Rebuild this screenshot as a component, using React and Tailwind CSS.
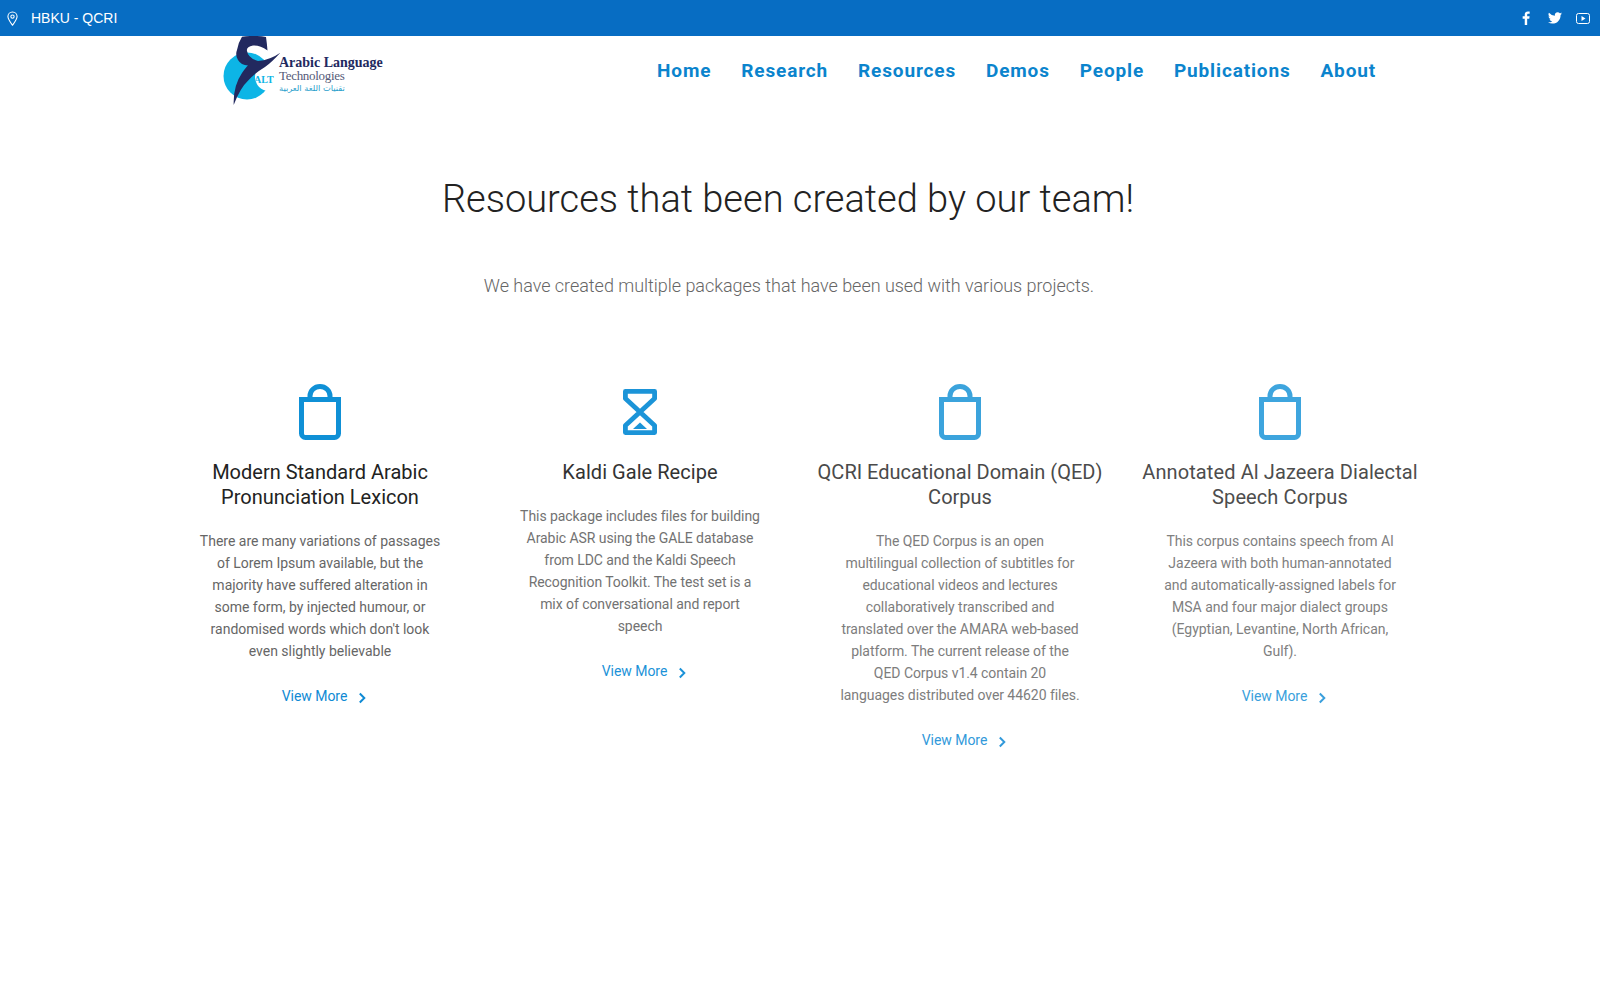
import React from 'react';

const cards = [
    {
        icon: 'bag',
        title: 'Modern Standard Arabic Pronunciation Lexicon',
        text: "There are many variations of passages of Lorem Ipsum available, but the majority have suffered alteration in some form, by injected humour, or randomised words which don't look even slightly believable",
        titleColor: 'text-[#222222]',
        textColor: 'text-[#666666]',
        iconColor: 'text-[#0f90d6]',
        linkColor: 'text-[#0f8ad4]',
        tracking: 'tracking-[-0.01px]',
        titleTracking: 'tracking-[0px]',
    },
    {
        icon: 'hourglass',
        title: 'Kaldi Gale Recipe',
        text: 'This package includes files for building Arabic ASR using the GALE database from LDC and the Kaldi Speech Recognition Toolkit. The test set is a mix of conversational and report speech',
        titleColor: 'text-[#333333]',
        textColor: 'text-[#727272]',
        iconColor: 'text-[#1b94d8]',
        linkColor: 'text-[#1b92d8]',
        tracking: 'tracking-[-0.06px]',
        titleTracking: 'tracking-[0.05px]',
    },
    {
        icon: 'bag',
        title: 'QCRI Educational Domain (QED) Corpus',
        text: 'The QED Corpus is an open\nmultilingual collection of subtitles for\neducational videos and lectures\ncollaboratively transcribed and\ntranslated over the AMARA web-based\nplatform. The current release of the\nQED Corpus v1.4 contain 20\nlanguages distributed over 44620 files.',
        titleColor: 'text-[#4a4a4a]',
        textColor: 'text-[#7d7d7d]',
        iconColor: 'text-[#3ba3dc]',
        linkColor: 'text-[#3299da]',
        tracking: 'tracking-[-0.05px]',
        titleTracking: 'tracking-[0px]',
    },
    {
        icon: 'bag',
        title: 'Annotated Al Jazeera Dialectal Speech Corpus',
        text: 'This corpus contains speech from Al Jazeera with both human-annotated and automatically-assigned labels for MSA and four major dialect groups (Egyptian, Levantine, North African, Gulf).',
        titleColor: 'text-[#4d4d4d]',
        textColor: 'text-[#808080]',
        iconColor: 'text-[#3ea5de]',
        linkColor: 'text-[#3a9fdc]',
        tracking: 'tracking-[-0.02px]',
        titleTracking: 'tracking-[0.1px]',
    },
];

const navItems = ['Home', 'Research', 'Resources', 'Demos', 'People', 'Publications', 'About'];

function BagIcon({ className }) {
    return (
        <svg viewBox="0 0 42 56" className={className} fill="none" stroke="currentColor" strokeWidth="5">
            <path d="M2.500 15.500h37v34a4 4 0 0 1-4 4H6.500a4 4 0 0 1-4-4z" />
            <path d="M11 15.500V12a10 9.500 0 0 1 20 0v3.500" />
        </svg>
    );
}

function HourglassIcon({ className }) {
    return (
        <svg viewBox="0 0 34 46" className={className} fill="none" stroke="currentColor" strokeWidth="4.800">
            <path d="M2.400 2.400h29.200v7L2.400 36.600v7h29.200v-7L2.400 9.400z" strokeLinejoin="round" />
            <path d="M10 40l7-6.500 7 6.500z" fill="currentColor" stroke="none" />
        </svg>
    );
}

function Logo() {
    return (
        <div className="flex self-start w-[160px] h-[70px] shrink-0">
            <svg viewBox="0 0 60 72" className="w-[60px] h-[72px] shrink-0">
                <circle cx="25" cy="40" r="23.500" fill="#0db5e6" />
                <circle cx="47" cy="41" r="14" fill="#ffffff" />
                <path d="M20 .7Q33 -1 44 1Q45 8 45.500 14.500Q38 9 31 9.500Q24 11 25 15Q26 22 36 25Q48 24 58.300 16.700Q50 26 43 31Q33 37 26.700 44Q18 52 11.700 69Q11 50 20 37Q24 31 26 29.500Q19 29 16 24Q13 19 15 14Q16 7 20 .7z" fill="#22295f" />
                <text x="32" y="47" fontSize="10" fontWeight="700" fill="#0db5e6" fontFamily="'Liberation Serif', serif">ALT</text>
            </svg>
            <div className="flex flex-col -ml-[3px] mt-[20px]">
                <span className="font-['Liberation_Serif',serif] font-bold text-[14px] leading-[14px] text-[#22295f] whitespace-nowrap">Arabic Language</span>
                <span className="font-['Liberation_Serif',serif] text-[13px] leading-[12px] text-[#555a78] whitespace-nowrap tracking-[-0.3px]">Technologies</span>
                <span className="font-['DejaVu_Sans',sans-serif] text-[8.300px] leading-[12px] text-[#2aa0cc] whitespace-nowrap">تقنيات اللغة العربية</span>
            </div>
        </div>
    );
}

function Card({ card }) {
    const Icon = card.icon === 'bag' ? BagIcon : HourglassIcon;
    return (
        <div className="flex flex-col items-center px-[34px] text-center">
            <div className={`h-[56px] flex items-center justify-center ${card.iconColor}`}>
                {card.icon === 'bag' ? (
                    <Icon className="w-[42px] h-[56px]" />
                ) : (
                    <Icon className="w-[34px] h-[46px]" />
                )}
            </div>
            <h3 className={`mt-[20px] w-[300px] text-[20px] leading-[25px] ${card.titleTracking} ${card.titleColor}`}>{card.title}</h3>
            <p className={`mt-[20px] w-[245px] text-[14px] leading-[22px] whitespace-pre-line ${card.tracking} ${card.textColor}`}>{card.text}</p>
            <a className={`mt-[23px] pl-[9px] flex items-center text-[14px] leading-[22px] tracking-[-0.05px] ${card.linkColor}`}>
                View More
                <svg viewBox="0 0 10 12" className="ml-[11px] mt-[3px] w-[9px] h-[12px]" fill="none" stroke="currentColor" strokeWidth="2.200">
                    <path d="M2 1l5 5-5 5" />
                </svg>
            </a>
        </div>
    );
}

export default function App() {
    return (
        <div className="min-h-[1000px] bg-white font-['Roboto',sans-serif]">
            {/* Top bar */}
            <div className="h-[36px] bg-[#076dc3] flex items-center justify-between pl-[6px] pr-[10px] text-white">
                <div className="flex items-center">
                    <svg viewBox="0 0 14 18" className="w-[13px] h-[15px]" fill="none" stroke="currentColor" strokeWidth="1.300">
                        <path d="M7 17C4 13 1.500 10 1.500 6.700a5.500 5.500 0 0 1 11 0C12.500 10 10 13 7 17z" />
                        <circle cx="7" cy="6.700" r="2" />
                    </svg>
                    <span className="ml-[12px] font-['Liberation_Sans',sans-serif] text-[14px]">HBKU - QCRI</span>
                </div>
                <div className="flex items-center">
                    <svg viewBox="0 0 10 18" className="w-[8px] h-[14px]" fill="currentColor">
                        <path d="M6.500 18V10h2.700l.4-3.100H6.500V5c0-.9.300-1.500 1.600-1.500h1.600V.7C9.400.6 8.500.5 7.400.5 5 .5 3.400 2 3.400 4.600v2.300H.7V10h2.700v8z" />
                    </svg>
                    <svg viewBox="0 0 24 20" className="ml-[18px] w-[14px] h-[12px]" fill="currentColor">
                        <path d="M24 2.400c-.9.400-1.800.7-2.800.8 1-.6 1.800-1.600 2.200-2.700-1 .6-2 1-3.100 1.200A4.900 4.900 0 0 0 11.900 6.200 14 14 0 0 1 1.700 1a4.900 4.900 0 0 0 1.500 6.600c-.8 0-1.600-.2-2.200-.6 0 2.400 1.700 4.400 3.900 4.900-.7.200-1.500.2-2.200.1.600 2 2.400 3.400 4.600 3.400A9.900 9.900 0 0 1 0 17.400 14 14 0 0 0 7.500 19.600c9.100 0 14.300-7.700 14-14.600 1-.7 1.800-1.600 2.500-2.600z" />
                    </svg>
                    <svg viewBox="0 0 14 11" className="ml-[14px] w-[14px] h-[11px]">
                        <rect x="0.500" y="0.500" width="13" height="10" rx="2" fill="none" stroke="currentColor" />
                        <path d="M5.500 3v5l4-2.500z" fill="currentColor" />
                    </svg>
                </div>
            </div>

            {/* Header */}
            <div className="h-[70px] flex items-center pl-[222px] pr-[224px] justify-between">
                <Logo />
                <nav className="flex items-center gap-[30px]">
                    {navItems.map((item) => (
                        <a key={item} className="text-[19px] font-bold tracking-[0.85px] text-[#0b84cd]">{item}</a>
                    ))}
                </nav>
            </div>

            {/* Intro */}
            <div className="mt-[67px] mr-[24px] text-center">
                <h1 className="text-[38px] leading-[52px] font-light text-[#222222]">Resources that been created by our team!</h1>
                <p className="mt-[47px] ml-[2px] text-[18px] leading-[27px] font-light text-[#666666] tracking-[-0.03px]">We have created multiple packages that have been used with various projects.</p>
            </div>

            {/* Cards */}
            <div className="mt-[85px] mx-[160px] grid grid-cols-4 items-start">
                {cards.map((card) => (
                    <Card key={card.title} card={card} />
                ))}
            </div>
        </div>
    );
}
